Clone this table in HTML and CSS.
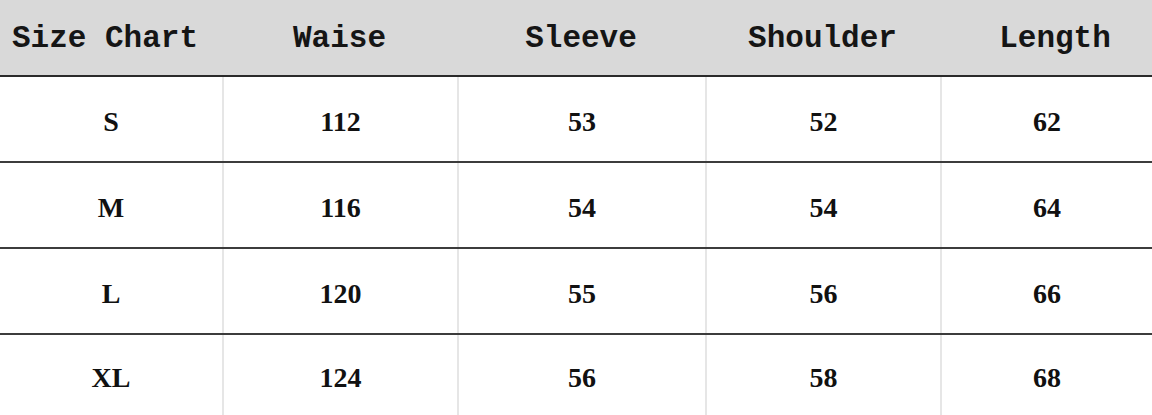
FILE: index.html
```html
<!DOCTYPE html>
<html lang="en">
<head>
<meta charset="utf-8">
<title>Size Chart</title>
<link rel="stylesheet" href="styles.css">
</head>
<body>
<div class="chart">
  <div class="row head">
    <div class="cell first">Size Chart</div>
    <div class="cell">Waise</div>
    <div class="cell">Sleeve</div>
    <div class="cell">Shoulder</div>
    <div class="cell">Length</div>
  </div>
  <div class="row body">
    <div class="cell">S</div>
    <div class="cell">112</div>
    <div class="cell">53</div>
    <div class="cell">52</div>
    <div class="cell">62</div>
  </div>
  <div class="row body">
    <div class="cell">M</div>
    <div class="cell">116</div>
    <div class="cell">54</div>
    <div class="cell">54</div>
    <div class="cell">64</div>
  </div>
  <div class="row body">
    <div class="cell">L</div>
    <div class="cell">120</div>
    <div class="cell">55</div>
    <div class="cell">56</div>
    <div class="cell">66</div>
  </div>
  <div class="row body last">
    <div class="cell">XL</div>
    <div class="cell">124</div>
    <div class="cell">56</div>
    <div class="cell">58</div>
    <div class="cell">68</div>
  </div>
</div>
</body>
</html>
```

FILE: styles.css
```css
html, body {
  margin: 0;
  padding: 0;
  background: #ffffff;
}

.chart {
  width: 1152px;
  height: 415px;
  overflow: hidden;
  display: flex;
  flex-direction: column;
}

.row {
  display: grid;
  grid-template-columns: 222px 235px 248px 235px 1fr;
}

.head {
  height: 75px;
  background: #d9d9d9;
  border-bottom: 2px solid #2a2a2a;
  font-family: "Liberation Mono", monospace;
  font-weight: bold;
  font-size: 31px;
  color: #151515;
}

.head .cell {
  display: flex;
  align-items: center;
  justify-content: center;
  padding-top: 1px;
}

.head .cell.first {
  padding-right: 12px;
}

.head .cell:last-child {
  padding-left: 18px;
}

.body {
  height: 84px;
  border-bottom: 2px solid #3c3c3c;
  font-family: "Liberation Serif", serif;
  font-weight: bold;
  font-size: 28px;
  color: #111111;
}

.body.last {
  border-bottom: none;
  height: 80px;
}

.body .cell {
  display: flex;
  align-items: center;
  justify-content: center;
  padding-top: 5px;
}

.body .cell + .cell {
  border-left: 2px solid #e6e6e6;
}
```
